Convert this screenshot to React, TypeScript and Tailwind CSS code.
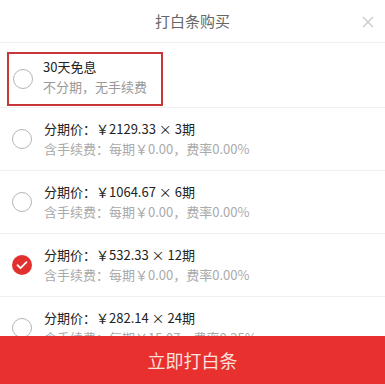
import React from "react";

const plans = [
  { title: "分期价：￥2129.33 × 3期", sub: "含手续费：每期￥0.00，费率0.00%", checked: false },
  { title: "分期价：￥1064.67 × 6期", sub: "含手续费：每期￥0.00，费率0.00%", checked: false },
  { title: "分期价：￥532.33 × 12期", sub: "含手续费：每期￥0.00，费率0.00%", checked: true },
  { title: "分期价：￥282.14 × 24期", sub: "含手续费：每期￥15.07，费率0.25%", checked: false },
];

function Radio({ checked }: { checked: boolean }) {
  if (checked) {
    return (
      <svg width="20" height="20" viewBox="0 0 20 20" className="shrink-0">
        <circle cx="10" cy="10" r="10" fill="#e2302f" />
        <path d="M5.5 10.2l3 3 6-6" fill="none" stroke="#fff" strokeWidth="1.8" strokeLinecap="round" strokeLinejoin="round" />
      </svg>
    );
  }
  return <div className="h-5 w-5 shrink-0 rounded-full border border-[#b5b5b5]" />;
}

export default function App() {
  return (
    <div
      className="relative h-[384px] w-[385px] overflow-hidden bg-white"
      style={{ fontFamily: '"Noto Sans CJK SC", "Noto Sans", sans-serif' }}
    >
      <div className="relative flex h-[43px] items-center justify-center border-b border-[#f0f0f0]">
        <span className="text-[15px] text-[#666]">打白条购买</span>
        <svg width="12" height="12" viewBox="0 0 12 12" className="absolute right-[11px] top-[16px]">
          <path d="M1 1l10 10M11 1L1 11" stroke="#c8c8c8" strokeWidth="1.2" />
        </svg>
      </div>

      <div className="border-b border-[#f0f0f0] px-[7px] pb-[1px] pt-[9px]">
        <div className="flex h-[54px] w-[156px] items-center gap-[10px] border-2 border-[#c8363a] pl-[4px]">
          <Radio checked={false} />
          <div className="flex flex-col pb-[4px] leading-[20px]">
            <span className="text-[13px] text-[#222]">30天免息</span>
            <span className="text-[13px] text-[#999]">不分期，无手续费</span>
          </div>
        </div>
      </div>

      {plans.map((p, i) => (
        <div key={i} className="flex h-[63px] items-center gap-[12px] border-b border-[#f0f0f0] pl-[12px]">
          <Radio checked={p.checked} />
          <div className="flex flex-col leading-[20px]">
            <span className="text-[13px] text-[#222]">{p.title}</span>
            <span className="text-[13px] text-[#aaa]">{p.sub}</span>
          </div>
        </div>
      ))}

      <div className="absolute bottom-0 left-0 flex h-[48px] w-full items-center justify-center bg-[#e8302e]">
        <span className="text-[18px] text-[#fbe0df]">立即打白条</span>
      </div>
    </div>
  );
}
